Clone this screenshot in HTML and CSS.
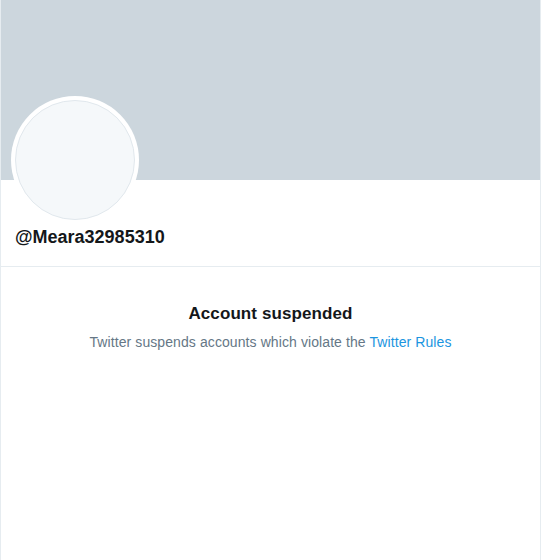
FILE: index.html
```html
<!DOCTYPE html>
<html>
<head>
<meta charset="utf-8">
<link rel="stylesheet" href="styles.css">
</head>
<body>
<div class="profile">
  <div class="banner"></div>
  <div class="header">
    <div class="avatar"><div class="avatar-inner"></div></div>
    <div class="handle">@Meara32985310</div>
  </div>
  <div class="suspended">
    <div class="title">Account suspended</div>
    <div class="sub">Twitter suspends accounts which violate the <a class="link" href="#">Twitter Rules</a></div>
  </div>
</div>
</body>
</html>
```
FILE: styles.css
```css
html, body {
  margin: 0;
  padding: 0;
  background: #ffffff;
}
body {
  font-family: "Liberation Sans", Arial, sans-serif;
}
.profile {
  width: 539px;
  min-height: 560px;
  border-left: 1px solid #e6ecf0;
  border-right: 1px solid #e6ecf0;
  box-sizing: content-box;
}
.banner {
  height: 180px;
  background: #ccd6dd;
}
.header {
  padding: 0 0 17px 10px;
  border-bottom: 1px solid #e6ecf0;
}
.avatar {
  width: 128px;
  height: 128px;
  margin-top: -84px;
  border-radius: 50%;
  background: #ffffff;
  padding: 4px;
  box-sizing: border-box;
}
.avatar-inner {
  width: 100%;
  height: 100%;
  border-radius: 50%;
  background: #f5f8fa;
  border: 1px solid #e1e8ed;
  box-sizing: border-box;
}
.handle {
  margin: 1px 0 0 4px;
  font-size: 18px;
  line-height: 24px;
  font-weight: bold;
  color: #14171a;
}
.suspended {
  padding-top: 36px;
  text-align: center;
}
.title {
  font-size: 17px;
  line-height: 22px;
  font-weight: bold;
  letter-spacing: 0.1px;
  color: #14171a;
}
.sub {
  margin-top: 7px;
  font-size: 14px;
  line-height: 20px;
  letter-spacing: 0.09px;
  color: #657786;
}
.link {
  color: #1b95e0;
  text-decoration: none;
}
```
